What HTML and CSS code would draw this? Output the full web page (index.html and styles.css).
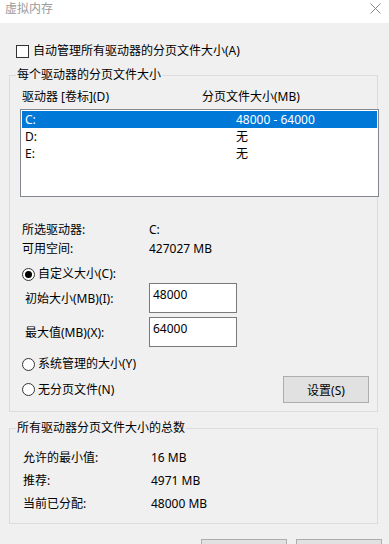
FILE: index.html
```html
<!DOCTYPE html>
<html lang="zh-CN">
<head>
<meta charset="utf-8">
<title>虚拟内存</title>
<link rel="stylesheet" href="styles.css">
</head>
<body>
<div class="window">
  <div class="titlebar">
    <span class="title">虚拟内存</span>
    <svg class="close" width="11" height="11" viewBox="0 0 11 11"><path d="M0.5 0.5 L10.5 10.5 M10.5 0.5 L0.5 10.5" stroke="#8a8a8a" stroke-width="1" fill="none"/></svg>
  </div>
  <div class="body">
    <div class="check-row"><span class="checkbox"></span><span>自动管理所有驱动器的分页文件大小(A)</span></div>

    <fieldset class="group group-drives">
      <legend>每个驱动器的分页文件大小</legend>
      <div class="list-head"><span>驱动器 [卷标](D)</span><span>分页文件大小(MB)</span></div>
      <div class="listbox">
        <div class="list-row selected"><span>C:</span><span>48000 - 64000</span></div>
        <div class="list-row"><span>D:</span><span>无</span></div>
        <div class="list-row"><span>E:</span><span>无</span></div>
      </div>
      <div class="info">
        <span>所选驱动器:</span><span>C:</span>
        <span>可用空间:</span><span>427027 MB</span>
      </div>
      <div class="radio-row custom"><span class="radio checked"></span><span>自定义大小(C):</span></div>
      <div class="field-row first"><span class="field-label">初始大小(MB)(I):</span><div class="input">48000</div></div>
      <div class="field-row second"><span class="field-label">最大值(MB)(X):</span><div class="input">64000</div></div>
      <div class="radio-row system"><span class="radio"></span><span>系统管理的大小(Y)</span></div>
      <div class="last-row">
        <div class="radio-row"><span class="radio"></span><span>无分页文件(N)</span></div>
        <div class="button set-button">设置(S)</div>
      </div>
    </fieldset>

    <fieldset class="group group-total">
      <legend>所有驱动器分页文件大小的总数</legend>
      <div class="totals">
        <span>允许的最小值:</span><span>16 MB</span>
        <span>推荐:</span><span>4971 MB</span>
        <span>当前已分配:</span><span>48000 MB</span>
      </div>
    </fieldset>

    <div class="dialog-buttons">
      <div class="button dlg" aria-label="确定"></div>
      <div class="button dlg" aria-label="取消"></div>
    </div>
  </div>
</div>
</body>
</html>
```

FILE: styles.css
```css
html, body {
  margin: 0;
  padding: 0;
}
body {
  width: 389px;
  height: 544px;
  overflow: hidden;
  background: #f0f0f0;
  font-family: "Noto Sans", "Noto Sans CJK SC", sans-serif;
  font-size: 12px;
  color: #000;
}
.window {
  width: 389px;
  height: 544px;
  display: flex;
  flex-direction: column;
}
.titlebar {
  height: 23px;
  flex: none;
  background: #fff;
  display: flex;
  justify-content: space-between;
  align-items: flex-start;
}
.title {
  color: #9a9a9a;
  font-size: 12px;
  line-height: 18px;
  padding-left: 5px;
}
.close {
  margin-top: 3px;
  margin-right: 8px;
}
.body {
  flex: 1;
  background: #f0f0f0;
  padding: 0 11px 0 9px;
}
.check-row {
  margin-top: 20px;
  padding-left: 7px;
  height: 16px;
  line-height: 16px;
  display: flex;
  align-items: center;
  gap: 4px;
}
.checkbox {
  width: 11px;
  height: 11px;
  border: 1px solid #333;
  background: #fff;
  flex: none;
}
.group {
  margin: 0;
  padding: 0 0 0 6px;
  border: 1px solid #dcdcdc;
  width: 369px;
  box-sizing: border-box;
  min-width: 0;
}
.group legend {
  padding: 0 1px;
  line-height: 16px;
  height: 16px;
}
.group-drives {
  margin-top: 8px;
  padding-bottom: 8px;
}
.list-head {
  margin-top: 6px;
  margin-left: 6px;
  display: grid;
  grid-template-columns: 180px 1fr;
  line-height: 16px;
}
.listbox {
  margin-top: 4px;
  margin-left: 4px;
  width: 359px;
  height: 88px;
  box-sizing: border-box;
  border: 1px solid #828790;
  background: #fff;
  padding: 1px;
}
.list-row {
  height: 17px;
  line-height: 17px;
  display: grid;
  grid-template-columns: 214px 1fr;
}
.list-row span:first-child {
  padding-left: 3px;
}
.list-row.selected {
  background: #0078d7;
  color: #fff;
}
.info {
  margin-top: 23px;
  margin-left: 6px;
  display: grid;
  grid-template-columns: 127px 1fr;
  grid-auto-rows: 19px;
  line-height: 19px;
}
.radio-row {
  display: flex;
  align-items: center;
  gap: 3px;
  height: 16px;
  line-height: 16px;
}
.group-drives > .radio-row {
  margin-left: 6px;
}
.radio-row.custom {
  margin-top: 8px;
}
.radio-row.system {
  margin-top: 9px;
}
.radio {
  width: 11px;
  height: 11px;
  border: 1px solid #333;
  border-radius: 50%;
  background: #fff;
  flex: none;
  display: flex;
  align-items: center;
  justify-content: center;
}
.radio.checked::after {
  content: "";
  width: 7px;
  height: 7px;
  border-radius: 50%;
  background: #000;
}
.field-row {
  display: flex;
  align-items: center;
  margin-left: 9px;
  height: 30px;
}
.field-row.first {
  margin-top: 1px;
}
.field-row.second {
  margin-top: 4px;
}
.field-label {
  width: 124px;
}
.input {
  width: 88px;
  height: 30px;
  box-sizing: border-box;
  border: 1px solid #7a7a7a;
  background: #fff;
  padding: 3px 3px;
  line-height: 16px;
}
.last-row {
  margin-top: 4px;
  margin-left: 6px;
  margin-right: 8px;
  height: 27px;
  display: flex;
  align-items: center;
  justify-content: space-between;
}
.button {
  box-sizing: border-box;
  border: 1px solid #adadad;
  background: #e1e1e1;
  display: flex;
  align-items: center;
  justify-content: center;
}
.set-button {
  width: 86px;
  height: 27px;
}
.group-total {
  margin-top: 8px;
  padding-bottom: 8px;
}
.totals {
  margin-top: 10px;
  margin-left: 7px;
  display: grid;
  grid-template-columns: 128px 1fr;
  grid-auto-rows: 23px;
  line-height: 23px;
}
.dialog-buttons {
  margin-top: 15px;
  display: flex;
  justify-content: flex-end;
  gap: 9px;
  margin-right: -4px;
}
.button.dlg {
  width: 86px;
  height: 23px;
}
```
